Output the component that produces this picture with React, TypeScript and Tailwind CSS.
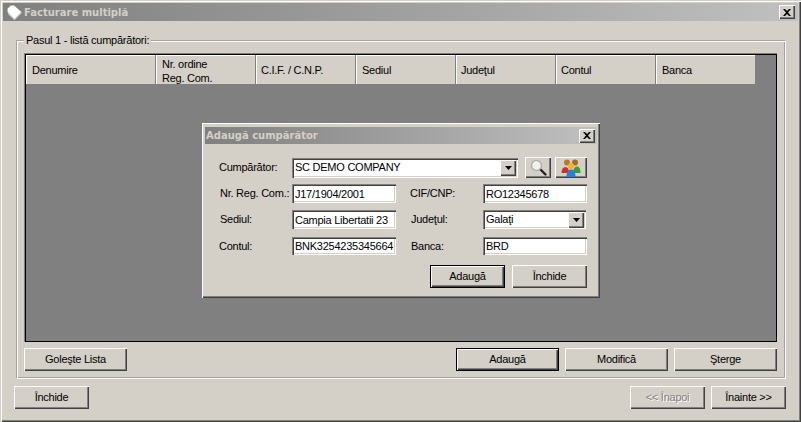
import type { ReactNode } from "react";

const FONT = "font-['Liberation_Sans',Arial,sans-serif] text-[11px] leading-[13px] tracking-[-0.25px]";
const RAISED =
  "bg-[#d4d0c8] shadow-[inset_1px_1px_0_#ffffff,inset_-1px_-1px_0_#404040,inset_-2px_-2px_0_#808080]";
const SUNKEN =
  "shadow-[inset_1px_1px_0_#808080,inset_2px_2px_0_#404040,inset_-1px_-1px_0_#ffffff,inset_-2px_-2px_0_#d4d0c8]";

const COLUMNS = [
  { label: "Denumire", width: "w-[130px]", pad: "pl-[6px]" },
  { label: "Nr. ordine Reg. Com.", width: "w-[100px]", pad: "pl-[6px]" },
  { label: "C.I.F. / C.N.P.", width: "w-[100px]", pad: "pl-[5px]" },
  { label: "Sediul", width: "w-[100px]", pad: "pl-[6px]" },
  { label: "Judeţul", width: "w-[100px]", pad: "pl-[5px]" },
  { label: "Contul", width: "w-[100px]", pad: "pl-[5px]" },
  { label: "Banca", width: "w-[99px]", pad: "pl-[6px]" },
];

function Btn({
  children,
  className = "w-[75px]",
  isDefault,
  disabled,
}: {
  children: ReactNode;
  className?: string;
  isDefault?: boolean;
  disabled?: boolean;
}) {
  return (
    <button
      className={`flex h-[23px] items-center justify-center ${className} ${
        isDefault
          ? "border border-black bg-[#d4d0c8] shadow-[inset_1px_1px_0_#ffffff,inset_-1px_-1px_0_#404040,inset_-2px_-2px_0_#808080]"
          : RAISED
      } ${disabled ? "text-[#808080] [text-shadow:1px_1px_0_#ffffff]" : "text-black"}`}
    >
      {children}
    </button>
  );
}

function CloseBox() {
  return (
    <span className={`flex h-[14px] w-[16px] items-center justify-center ${RAISED}`}>
      <svg width="8" height="7" viewBox="0 0 8 7">
        <path d="M0 0h2l2 2 2-2h2L5 3.5 8 7H6L4 5 2 7H0l3-3.5z" fill="#000" />
      </svg>
    </span>
  );
}

function Arrow() {
  return (
    <span className={`flex h-[16px] w-[16px] items-center justify-center ${RAISED}`}>
      <svg width="7" height="4" viewBox="0 0 7 4">
        <path d="M0 0h7L3.5 4z" fill="#000" />
      </svg>
    </span>
  );
}

function Field({ value, height = "h-[19px]" }: { value: string; height?: string }) {
  return (
    <input
      readOnly
      value={value}
      className={`w-[104px] ${height} bg-white px-[3px] text-black outline-none ${SUNKEN}`}
    />
  );
}

function Combo({ value, width, height }: { value: string; width: string; height: string }) {
  return (
    <div className={`flex items-center justify-between bg-white pl-[3px] pr-[2px] ${width} ${height} ${SUNKEN}`}>
      <span>{value}</span>
      <Arrow />
    </div>
  );
}

function SearchIcon() {
  return (
    <svg width="19" height="18" viewBox="0 0 19 18">
      <path d="M11.500 10.500l5 5" stroke="#222" strokeWidth="2.400" strokeLinecap="round" />
      <circle cx="7.500" cy="6.500" r="5" fill="#f0f0ee" stroke="#aeaeaa" strokeWidth="1.400" />
      <path d="M4.500 6a3 3 0 0 1 3-3" stroke="#ffffff" strokeWidth="1.200" fill="none" />
    </svg>
  );
}

function UsersIcon() {
  return (
    <svg width="20" height="18" viewBox="0 0 20 18">
      <circle cx="6" cy="3.500" r="3" fill="#b9772e" />
      <circle cx="14" cy="3.500" r="3" fill="#a56a2a" />
      <path d="M0.500 14c0-4 1.700-6 4-6s3.500 2 3.500 6z" fill="#c8321f" />
      <path d="M12 14c0-4 1.700-6.500 4-6.500s3.500 2.500 3.500 6.500z" fill="#3f9a32" />
      <circle cx="10" cy="7" r="3" fill="#f0b52c" />
      <path d="M5.500 18c0-5.500 2-7.500 4.500-7.500s4.500 2 4.500 7.500z" fill="#2d7fd6" />
    </svg>
  );
}

function TagIcon() {
  return (
    <svg width="15" height="15" viewBox="0 0 14 14">
      <path d="M3.500 0.500h3L13.500 6.500 7 13.500 0.500 6.500V3.500z" fill="#ffffff" />
      <path d="M1 8l6 5.500L13.500 7" stroke="#c9c9c4" strokeWidth="1" fill="none" />
    </svg>
  );
}

function Row({ children, className = "" }: { children: ReactNode; className?: string }) {
  return <div className={`flex items-center whitespace-nowrap ${className}`}>{children}</div>;
}

function Dialog() {
  return (
    <div className={`absolute left-[202px] top-[123px] flex h-[175px] w-[398px] flex-col p-[3px] pt-[4px] ${RAISED}`}>
      <div className="flex h-[17px] items-center justify-between bg-gradient-to-r from-[#808080] to-[#c0c0c0] pl-[1px] pr-[2px]">
        <span className="font-['DejaVu_Sans',sans-serif] text-[10px] font-bold tracking-normal text-[#d4d0c8]">Adaugă cumpărător</span>
        <CloseBox />
      </div>
      <div className="flex flex-col pl-[14px] pt-[13px]">
        <Row>
          <span className="w-[73px]">Cumpărător:</span>
          <Combo value="SC DEMO COMPANY" width="w-[226px]" height="h-[20px]" />
          <button className={`ml-[7px] flex h-[21px] w-[26px] items-center justify-center ${RAISED}`}>
            <SearchIcon />
          </button>
          <button className={`ml-[4px] flex h-[21px] w-[32px] items-center justify-center ${RAISED}`}>
            <UsersIcon />
          </button>
        </Row>
        <Row className="mt-[6px]">
          <span className="w-[73px] pl-[1px]">Nr. Reg. Com.:</span>
          <Field value="J17/1904/2001" />
          <span className="w-[87px] pl-[14px]">CIF/CNP:</span>
          <Field value="RO12345678" />
        </Row>
        <Row className="mt-[7px]">
          <span className="w-[73px] pl-[1px]">Sediul:</span>
          <Field value="Campia Libertatii 23" />
          <span className="w-[87px] pl-[15px]">Judeţul:</span>
          <Combo value="Galaţi" width="w-[103px]" height="h-[19px]" />
        </Row>
        <Row className="mt-[8px]">
          <span className="w-[73px]">Contul:</span>
          <Field value="BNK3254235345664" height="h-[18px]" />
          <span className="w-[87px] pl-[15px]">Banca:</span>
          <Field value="BRD" height="h-[18px]" />
        </Row>
        <div className="mt-[10px] flex justify-end gap-[7px] pr-[10px]">
          <Btn isDefault>Adaugă</Btn>
          <Btn>Închide</Btn>
        </div>
      </div>
    </div>
  );
}

export default function App() {
  return (
    <div
      className={`relative flex h-[422px] w-[801px] flex-col bg-[#d4d0c8] p-[3px] text-black ${FONT} shadow-[inset_1px_1px_0_#d4d0c8,inset_2px_2px_0_#ffffff,inset_-1px_-1px_0_#404040,inset_-2px_-2px_0_#808080]`}
    >
      <div className="flex h-[18px] items-center justify-between bg-gradient-to-r from-[#808080] to-[#c0c0c0] pl-[4px] pr-[3px]">
        <span className="flex items-center gap-[2px] font-['DejaVu_Sans',sans-serif] text-[10px] font-bold tracking-normal text-[#d4d0c8]">
          <TagIcon />
          Facturare multiplă
        </span>
        <CloseBox />
      </div>

      <fieldset className="ml-[13px] mr-[12px] mt-[13px] h-[345px] border border-[#a8a49c] border-b-white border-r-white px-[7px] pb-[7px] shadow-[inset_1px_1px_0_#ffffff,inset_-1px_-1px_0_#a8a49c]">
        <legend className="bg-[#d4d0c8] px-[2px] leading-[13px]">Pasul 1 - listă cumpărători:</legend>
        <div className="mt-[6px] h-[289px] w-[753px] border-l border-t border-[#808080]">
          <div className="h-full border border-black bg-[#808080]">
            <div className="flex h-[29px] w-[729px] bg-[#d4d0c8]">
              {COLUMNS.map((col) => (
                <div
                  key={col.label}
                  className={`flex h-full items-center border-r border-[#808080] pt-[2px] shadow-[inset_1px_0_0_#ffffff,inset_0_1px_0_#ffffff] last:border-r-0 ${col.width} ${col.pad}`}
                >
                  <span className={col.label.startsWith("Nr.") ? "w-[60px] leading-[14px]" : ""}>{col.label}</span>
                </div>
              ))}
            </div>
          </div>
        </div>
        <div className="mt-[6px] flex w-[753px] items-center">
          <Btn className="w-[103px]">Goleşte Lista</Btn>
          <div className="ml-auto flex gap-[6px]">
            <Btn className="w-[103px]" isDefault>Adaugă</Btn>
            <Btn className="w-[103px]">Modifică</Btn>
            <Btn className="w-[103px]">Şterge</Btn>
          </div>
        </div>
      </fieldset>

      <div className="ml-[11px] mr-[12px] mt-[7px] flex items-center">
        <Btn>Închide</Btn>
        <div className="ml-auto flex gap-[6px]">
          <Btn disabled>&lt;&lt; Înapoi</Btn>
          <Btn>Înainte &gt;&gt;</Btn>
        </div>
      </div>

      <Dialog />
    </div>
  );
}
